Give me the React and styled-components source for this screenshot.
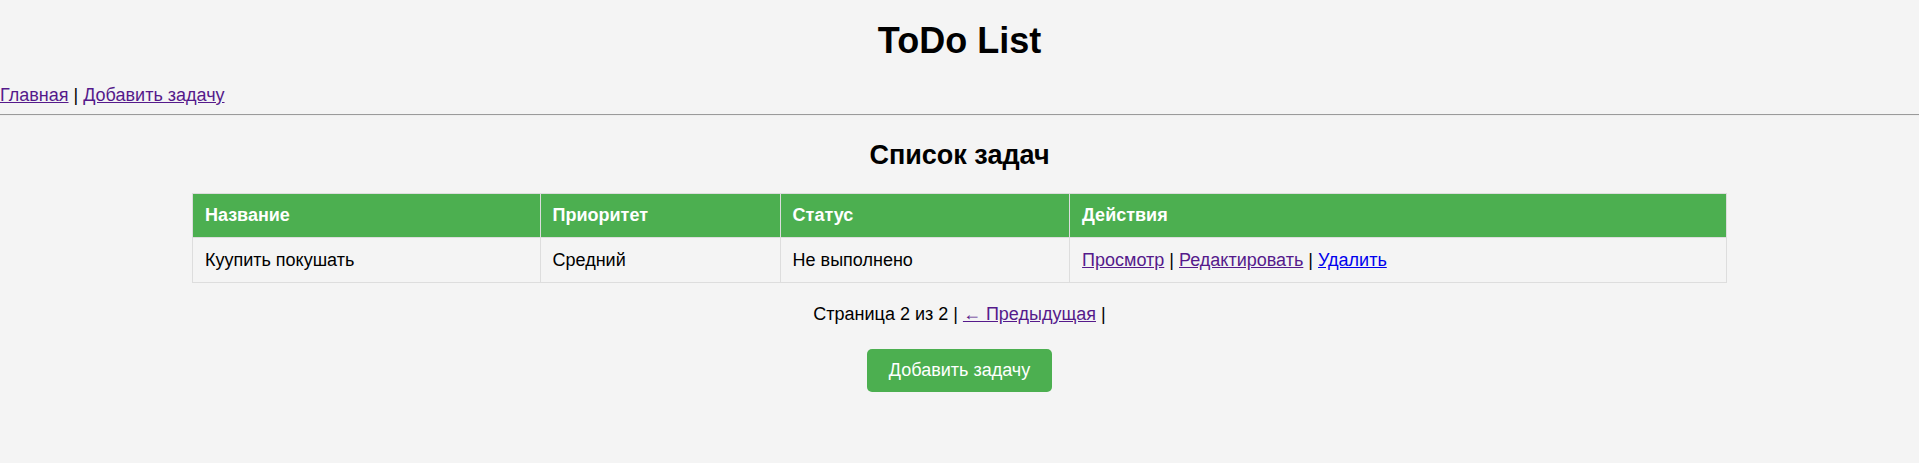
import styled, { createGlobalStyle } from "styled-components";

const GlobalStyle = createGlobalStyle`
  body {
    margin: 0;
    background-color: #f4f4f4;
    font-family: "Liberation Sans", Arial, sans-serif;
    font-size: 18px;
    color: #000;
  }
`;

const Header = styled.header`
  text-align: center;
  padding-top: 20px;
`;
const Title = styled.h1`
  margin: 0;
  font-size: 36px;
  line-height: 41px;
`;
const Nav = styled.nav`
  margin-top: 24px;
  line-height: 21px;
`;
const Link = styled.a`
  color: ${(p) => (p.$visited ? "#551a8b" : "#0000ee")};
  text-decoration: underline;
  cursor: pointer;
`;
const Rule = styled.hr`
  margin: 8px 0 0;
  border: none;
  border-top: 1px solid #9a9a9a;
  border-bottom: 1px solid #eeeeee;
`;
const Main = styled.main`
  padding-top: 24px;
`;
const Subtitle = styled.h2`
  margin: 0 0 22px;
  text-align: center;
  font-size: 27px;
  line-height: 31px;
`;
const Table = styled.table`
  width: 80%;
  margin: 0 auto;
  border-collapse: collapse;
`;
const Th = styled.th`
  background-color: #4caf50;
  color: #ffffff;
  text-align: left;
  padding: 11px 12px;
  line-height: 21px;
  border: 1px solid #dddddd;
`;
const Td = styled.td`
  padding: 12px 12px 11px;
  line-height: 21px;
  border: 1px solid #dddddd;
`;
const Pagination = styled.div`
  text-align: center;
  margin-top: 21px;
  line-height: 21px;
`;
const ButtonRow = styled.div`
  display: flex;
  justify-content: center;
  margin-top: 24px;
`;
const AddButton = styled.a`
  display: inline-block;
  background-color: #4caf50;
  color: #ffffff;
  padding: 11px 22px;
  line-height: 21px;
  border-radius: 5px;
  text-decoration: none;
`;

const tasks = [
  { title: "Куупить покушать", priority: "Средний", status: "Не выполнено" },
];

const App = () => {
  return (
    <>
      <GlobalStyle />
      <Header>
        <Title>ToDo List</Title>
      </Header>
      <Nav>
        <Link $visited>Главная</Link> | <Link $visited>Добавить задачу</Link>
      </Nav>
      <Rule />
      <Main>
        <Subtitle>Список задач</Subtitle>
        <Table>
          <thead>
            <tr>
              <Th>Название</Th>
              <Th>Приоритет</Th>
              <Th>Статус</Th>
              <Th>Действия</Th>
            </tr>
          </thead>
          <tbody>
            {tasks.map((task) => (
              <tr key={task.title}>
                <Td>{task.title}</Td>
                <Td>{task.priority}</Td>
                <Td>{task.status}</Td>
                <Td>
                  <Link $visited>Просмотр</Link> |{" "}
                  <Link $visited>Редактировать</Link> | <Link>Удалить</Link>
                </Td>
              </tr>
            ))}
          </tbody>
        </Table>
        <Pagination>
          Страница 2 из 2 | <Link $visited>← Предыдущая</Link> |
        </Pagination>
        <ButtonRow>
          <AddButton>Добавить задачу</AddButton>
        </ButtonRow>
      </Main>
    </>
  );
};

export default App;
